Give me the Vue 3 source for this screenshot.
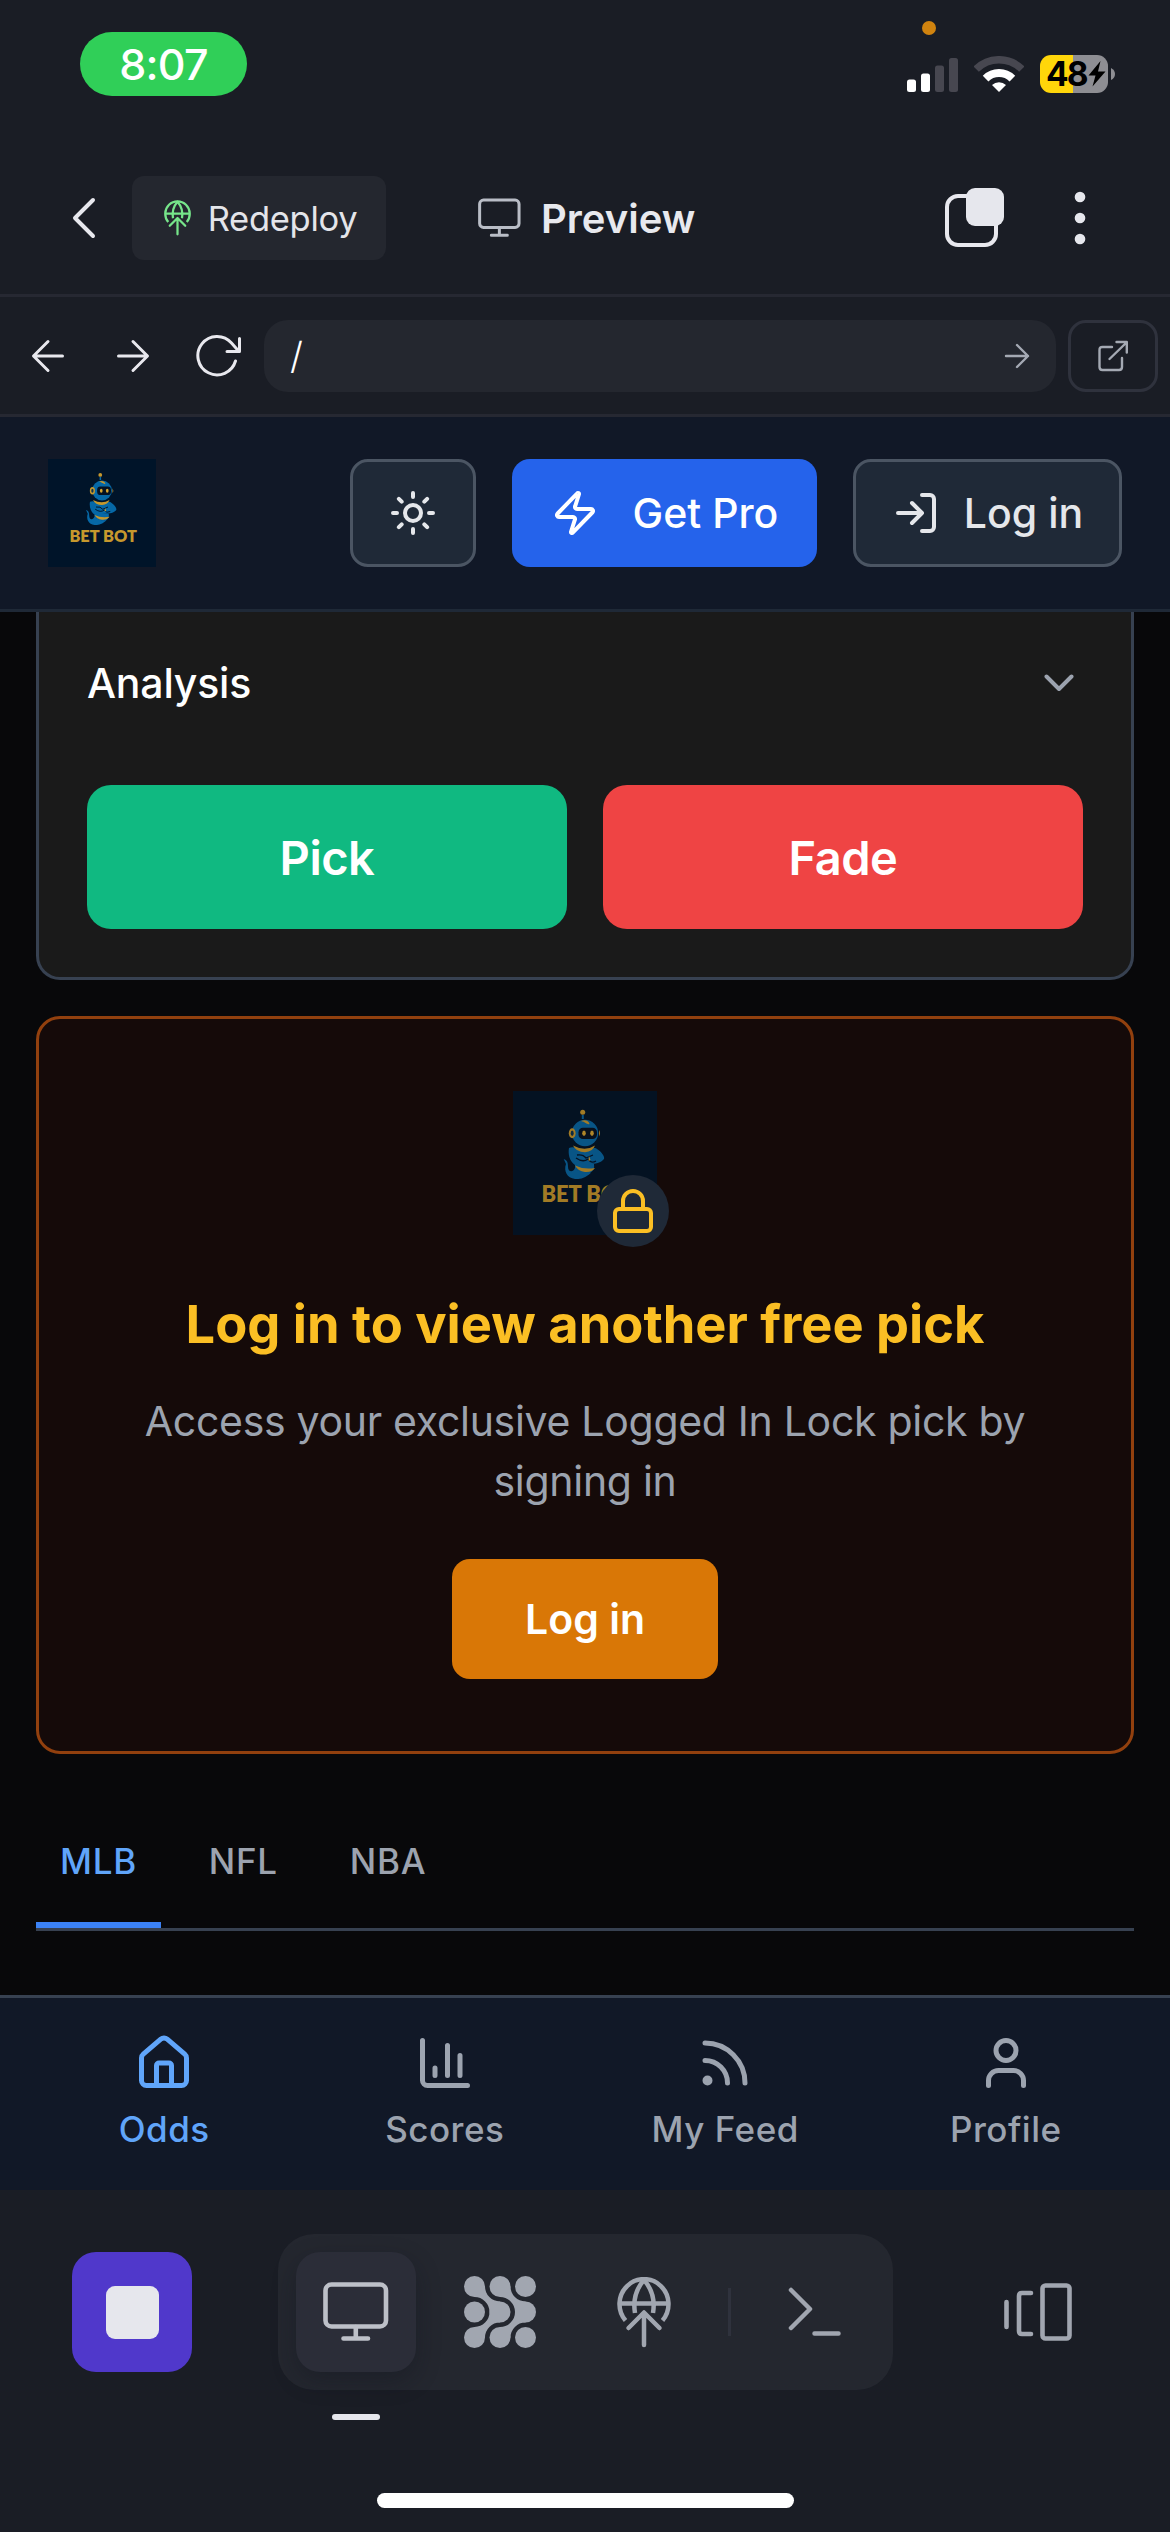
<script setup>
const leagues = ['MLB', 'NFL', 'NBA']
const activeLeague = 'MLB'
</script>

<template>
  <div class="screen">
    <header class="status">
      <div class="time">8:07</div>
      <i class="privacy-dot"></i>
      <div class="indicators">
        <svg width="51" height="36" viewBox="0 0 51 36">
          <rect x="0" y="23.500" width="9" height="12.500" rx="2.500" fill="#fff" />
          <rect x="14" y="17.500" width="9" height="18.500" rx="2.500" fill="#fff" />
          <rect x="28" y="9.500" width="9" height="26.500" rx="2.500" fill="#474750" />
          <rect x="42" y="2" width="9" height="34" rx="2.500" fill="#474750" />
        </svg>
        <svg class="wifi" width="50" height="36" viewBox="0 0 50 36">
          <path d="M2.200 13.200 A32.200 32.200 0 0 1 47.800 13.200" fill="none" stroke="#474750" stroke-width="7.500" />
          <path d="M11.600 22.600 A19 19 0 0 1 38.400 22.600" fill="none" stroke="#fff" stroke-width="8" />
          <path d="M25 36 L18 29 A10.300 10.300 0 0 1 32 29Z" fill="#fff" />
        </svg>
        <div class="battery">
          <span>48</span>
          <svg width="18" height="26" viewBox="0 0 18 26"><path d="M12.500 0 L0.500 14.500 H7.500 L4.500 25.500 L17.500 10.500 H10Z" fill="#000" /></svg>
        </div>
        <svg class="nub" width="4" height="12" viewBox="0 0 4 12"><path d="M0 0 Q4 2 4 6 Q4 10 0 12Z" fill="#8e8e93" /></svg>
      </div>
    </header>

    <div class="toolbar">
      <svg class="back" width="24" height="42" viewBox="0 0 24 42"><path d="M21 3 L3 21 L21 39" fill="none" stroke="#e8e8ee" stroke-width="4" stroke-linecap="round" stroke-linejoin="round" /></svg>
      <button class="redeploy">
        <svg width="27" height="36"><use href="#deploy" /></svg>
        <span>Redeploy</span>
      </button>
      <div class="preview">
        <svg width="43" height="40"><use href="#monitor" /></svg>
        <span>Preview</span>
      </div>
      <svg class="windows" width="60" height="60" viewBox="0 0 60 60">
        <rect x="2" y="8" width="49" height="49" rx="11" fill="none" stroke="#e8e8ee" stroke-width="4" />
        <rect x="21" y="0" width="38" height="38" rx="9" fill="#e6e7ed" />
      </svg>
      <svg class="more" width="12" height="54" viewBox="0 0 12 54" fill="#e6e7ed">
        <circle cx="6" cy="6" r="5.300" /><circle cx="6" cy="27" r="5.300" /><circle cx="6" cy="48" r="5.300" />
      </svg>
    </div>

    <nav class="browser">
      <svg class="nav-back" width="34" height="34" viewBox="0 0 34 34"><path d="M31.500 17 H3 M17 2.500 L2.500 17 L17 31.500" /></svg>
      <svg class="nav-next" width="34" height="34" viewBox="0 0 34 34"><path d="M2.500 17 H31 M17 2.500 L31.500 17 L17 31.500" /></svg>
      <svg class="reload" width="46" height="44" viewBox="0 0 46 44"><path d="M39.500 27 A19.200 19.200 0 1 1 35.500 9 L43 17.500 M43.500 4.500 V17.500 H31" /></svg>
      <div class="url">
        <span>/</span>
        <svg width="26" height="26" viewBox="0 0 26 26"><path d="M2 13 H24 M13 2 L24 13 L13 24" /></svg>
      </div>
      <button class="external">
        <svg width="32" height="32" viewBox="0 0 32 32"><path d="M15 7 H5.500 Q2.500 7 2.500 10 V27 Q2.500 30 5.500 30 H22 Q25 30 25 27 V18 M12.500 19 L29.500 2.500 M19.500 2 H29.800 V12.500" /></svg>
      </button>
    </nav>

    <header class="app-header">
      <svg class="logo" width="108" height="108" viewBox="0 0 144 144">
        <use href="#bot-mark" width="144" height="144" />
        <text x="28.500" y="110.800" textLength="90" lengthAdjust="spacingAndGlyphs">BET BOT</text>
      </svg>
      <button class="btn theme">
        <svg width="48" height="48" viewBox="0 0 24 24"><circle cx="12" cy="12" r="4" /><path d="M12 2v2M12 20v2M4.930 4.930l1.410 1.410M17.660 17.660l1.410 1.410M2 12h2M20 12h2M6.340 17.660l-1.410 1.410M19.070 4.930l-1.410 1.410" /></svg>
      </button>
      <button class="btn pro">
        <svg width="48" height="48" viewBox="0 0 24 24"><path d="M4 14a1 1 0 0 1-.780-1.630l9.900-10.200a.5.5 0 0 1 .860.460l-1.920 6.020A1 1 0 0 0 13 10h7a1 1 0 0 1 .780 1.630l-9.900 10.200a.5.5 0 0 1-.860-.460l1.920-6.020A1 1 0 0 0 11 14z" /></svg>
        <span>Get Pro</span>
      </button>
      <button class="btn login">
        <svg width="48" height="48" viewBox="0 0 24 24"><path d="M15 3h4a2 2 0 0 1 2 2v14a2 2 0 0 1-2 2h-4M10 17l5-5-5-5M15 12H3" /></svg>
        <span>Log in</span>
      </button>
    </header>

    <main class="content">
      <section class="pick-card">
        <div class="analysis">
          <span>Analysis</span>
          <svg width="30" height="18" viewBox="0 0 30 18"><path d="M2.500 2.500 L15 15 L27.500 2.500" fill="none" stroke="#9ca3af" stroke-width="4" stroke-linecap="round" stroke-linejoin="round" /></svg>
        </div>
        <div class="choices">
          <button class="pick">Pick</button>
          <button class="fade">Fade</button>
        </div>
      </section>

      <section class="lock-card">
        <div class="lock-logo">
          <svg class="logo dim" width="144" height="144" viewBox="0 0 144 144">
            <use href="#bot-mark" width="144" height="144" />
            <text x="28.500" y="110.800" textLength="90" lengthAdjust="spacingAndGlyphs">BET BOT</text>
          </svg>
          <div class="badge">
            <svg width="48" height="48" viewBox="0 0 24 24"><rect x="3" y="11" width="18" height="11" rx="2" /><path d="M7 11V7a5 5 0 0 1 10 0v4" /></svg>
          </div>
        </div>
        <h2>Log in to view another free pick</h2>
        <p>Access your exclusive Logged In Lock pick by<br />signing in</p>
        <button class="signin">Log in</button>
      </section>

      <div class="tabs">
        <div v-for="l in leagues" :key="l" class="tab" :class="{ active: l === activeLeague }">{{ l }}</div>
      </div>
    </main>

    <nav class="bottom-nav">
      <a class="active">
        <svg viewBox="0 0 24 24"><path d="M15 21v-8a1 1 0 0 0-1-1h-4a1 1 0 0 0-1 1v8" /><path d="M3 10a2 2 0 0 1 .709-1.528l7-5.999a2 2 0 0 1 2.582 0l7 5.999A2 2 0 0 1 21 10v9a2 2 0 0 1-2 2H5a2 2 0 0 1-2-2z" /></svg>
        <span>Odds</span>
      </a>
      <a>
        <svg viewBox="0 0 24 24"><path d="M3 3v16a2 2 0 0 0 2 2h16M18 17V9M13 17V5M8 17v-3" /></svg>
        <span>Scores</span>
      </a>
      <a>
        <svg viewBox="0 0 24 24"><path d="M4 11a9 9 0 0 1 9 9M4 4a16 16 0 0 1 16 16" /><circle cx="5" cy="19" r="1" /></svg>
        <span>My Feed</span>
      </a>
      <a>
        <svg viewBox="0 0 24 24"><path d="M19 21v-2a4 4 0 0 0-4-4H9a4 4 0 0 0-4 4v2" /><circle cx="12" cy="7" r="4" /></svg>
        <span>Profile</span>
      </a>
    </nav>

    <footer class="dock">
      <div class="dock-row">
        <button class="stop"><i></i></button>
        <div class="tools">
          <div class="tool selected">
            <svg width="66" height="60"><use href="#monitor" /></svg>
            <i></i>
          </div>
          <div class="tool">
            <svg width="72" height="72" viewBox="0 0 72 72" fill="currentColor">
              <circle v-for="n in 9" :key="n" :cx="10.5 + ((n - 1) % 3) * 25.5" :cy="10.5 + Math.floor((n - 1) / 3) * 25.5" r="10.500" />
              <g v-for="dx in [0, 25.5]" :key="dx" :transform="`translate(${dx} 0)`">
                <path d="M21 10.500 A15 15 0 0 0 36 25.500 V46.500 A15 15 0 0 0 21 61.500 L10.500 61.500 V51 A15 15 0 0 0 10.500 21 V10.500Z" />
              </g>
            </svg>
          </div>
          <div class="tool">
            <svg width="54" height="71"><use href="#deploy" /></svg>
          </div>
          <i class="divider"></i>
          <div class="tool">
            <svg width="54" height="50" viewBox="0 0 54 50"><path d="M3 3 L22 22 L3 41 M26.500 46.500 H50.500" fill="none" stroke="currentColor" stroke-width="4.500" stroke-linecap="round" stroke-linejoin="round" /></svg>
          </div>
        </div>
        <svg class="panels" width="69" height="58" viewBox="0 0 69 58"><path d="M2.500 19 V44 M27 10 H18 Q15 10 15 13 V48 Q15 51 18 51 H27" /><rect x="38.500" y="2.500" width="27" height="53" rx="3" /></svg>
      </div>
      <div class="home-indicator"></div>
    </footer>

    <svg class="defs" aria-hidden="true">
      <symbol id="bot-mark" viewBox="0 0 144 144">
        <rect width="144" height="144" fill="#001429" />
        <g fill="#0668a6">
          <path d="M56 57 C60 55 64 57 72 60.500 C80 57 82 56 84 58 C89 61 92 66 91 68 C88 72 82 73 77 73 L62 74 C56 70 55 62 56 57Z" />
          <path d="M62 73 H81 Q82 79 77 82 Q70 84 62 78Z" />
          <path d="M50.700 68 C54 69 55 71 55 76 C55 81 60 82 62 77 C66 81 72 82.500 78 81.700 C72 87.500 66 88.500 62 88 C54 87 50.500 80 53 73Z" />
          <circle cx="72" cy="42" r="13.200" />
          <rect x="68.800" y="24" width="2" height="4" />
        </g>
        <g fill="#c6982d">
          <circle cx="69.700" cy="21.300" r="2.500" />
          <path d="M68 30 C72 28 76 30 76.500 33 C74 34 73 31 68 30Z" />
          <ellipse cx="59.200" cy="42.300" rx="3.400" ry="5" />
          <path d="M86 39 Q88 42 86 45.500Z" />
          <path d="M60 54.500 Q72 61 82 54.500 Q80 60.500 72 61.200 Q63 61 60 54.500Z" />
          <path d="M62 74.500 Q71 79 82 77 Q79 81.500 72 81 Q65 80 62 74.500Z" />
        </g>
        <rect x="65.500" y="36.800" width="18.500" height="11.200" rx="4.500" fill="#041223" />
        <ellipse cx="59.200" cy="42.300" rx="1.500" ry="2.800" fill="#0b3350" />
        <g fill="#d6a531">
          <ellipse cx="71" cy="42.300" rx="1.800" ry="2.700" />
          <ellipse cx="79" cy="42.300" rx="1.800" ry="2.700" />
        </g>
        <path d="M64 64 Q70 63 73 67 L80 64 M63 67 Q70 72 75 68 Q78 73 83 70" fill="none" stroke="#001429" stroke-width="1.300" />
        <path d="M76 65 L77.500 69 L75.500 70Z" fill="#d6a531" />
      </symbol>
      <symbol id="deploy" viewBox="0 0 54 71">
        <g fill="none" stroke="currentColor" stroke-width="4.500" stroke-linecap="round" stroke-linejoin="round">
          <path stroke-linecap="butt" d="M8.500 43.500 A24.500 25 0 1 1 45.500 43.500" />
          <path stroke-linecap="butt" d="M18 36 C16 24 19 12 27 3 C35 12 38 24 36 36 M3 26.500 H51" />
          <path d="M27 36 V68 M11.500 51 L27 35.500 L42.500 51" />
        </g>
      </symbol>
      <symbol id="monitor" viewBox="0 0 66 60">
        <g fill="none" stroke="currentColor" stroke-width="4.600" stroke-linecap="round">
          <rect x="2.500" y="2.500" width="60.500" height="42" rx="6" />
          <path d="M32.800 45 V56.500 M20.500 56.500 H45" />
        </g>
      </symbol>
    </svg>
  </div>
</template>

<style>
body {
  margin: 0;
  background: #1a1d25;
}
</style>

<style scoped>
* {
  box-sizing: border-box;
}
.screen {
  width: 1170px;
  height: 2532px;
  display: flex;
  flex-direction: column;
  overflow: hidden;
  background: #1a1d25;
  font-family: Inter, "Liberation Sans", sans-serif;
  color: #fff;
}
.defs {
  position: absolute;
  width: 0;
  height: 0;
}
svg {
  display: block;
  flex: none;
}
button {
  border: 0;
  padding: 0;
  margin: 0;
  font: inherit;
  color: inherit;
  display: flex;
  align-items: center;
  justify-content: center;
  flex: none;
}
span {
  white-space: nowrap;
}

.status {
  position: relative;
  height: 142px;
  flex: none;
  display: flex;
  justify-content: space-between;
  padding: 32px 55px 0 80px;
}
.time {
  width: 167px;
  height: 64px;
  border-radius: 32px;
  background: #30cf58;
  display: flex;
  align-items: center;
  justify-content: center;
  font-size: 43px;
  font-weight: 500;
  letter-spacing: -0.8px;
}
.privacy-dot {
  position: absolute;
  left: 922px;
  top: 21px;
  width: 14px;
  height: 14px;
  border-radius: 50%;
  background: #d0830f;
}
.indicators {
  display: flex;
  align-items: center;
  height: 38px;
  margin-top: 23px;
}
.wifi {
  margin-left: 16px;
}
.battery {
  width: 68px;
  height: 38px;
  margin-left: 16px;
  border-radius: 11px;
  background: linear-gradient(90deg, #ffd60a 33px, #8e8e93 33px);
  display: flex;
  align-items: center;
  padding-left: 6px;
  color: #000;
  font-size: 33.5px;
  font-weight: 700;
  letter-spacing: -2px;
}
.battery svg {
  margin-left: 2px;
}
.nub {
  margin-left: 3px;
}

.toolbar {
  height: 155px;
  flex: none;
  display: flex;
  align-items: center;
  border-bottom: 3px solid #262832;
  padding-left: 72px;
}
.redeploy {
  width: 254px;
  height: 84px;
  margin-left: 36px;
  padding-left: 3px;
  border-radius: 12px;
  background: #24272f;
  color: #e4e5ea;
  font-size: 34.5px;
  letter-spacing: -0.3px;
  gap: 17px;
}
.redeploy svg {
  color: #76e58a;
}
.preview {
  display: flex;
  align-items: center;
  gap: 20px;
  margin-left: 92px;
  width: 467px;
  font-size: 40px;
  font-weight: 600;
  color: #e8e9ee;
}
.preview svg {
  color: #b9bdc6;
}
.more {
  margin-left: 69px;
}

.browser {
  height: 120px;
  flex: none;
  display: flex;
  align-items: center;
  border-bottom: 3px solid #262832;
  padding: 0 12px 0 31px;
}
.browser svg {
  fill: none;
  stroke: #e8e8ee;
  stroke-width: 3;
  stroke-linecap: round;
  stroke-linejoin: round;
}
.nav-next {
  margin-left: 51px;
}
.reload {
  margin-left: 46px;
}
.url {
  flex: 1;
  height: 72px;
  margin-left: 22px;
  border-radius: 24px;
  background: #24272f;
  display: flex;
  align-items: center;
  justify-content: space-between;
  padding: 0 26px;
  font-size: 37px;
  font-weight: 300;
}
.browser .url svg,
.browser .external svg {
  stroke: #a4a9b3;
  stroke-width: 2.4;
}
.external {
  width: 90px;
  height: 72px;
  margin-left: 12px;
  border: 3px solid #2f323d;
  border-radius: 18px;
  background: transparent;
}

.app-header {
  height: 195px;
  flex: none;
  display: flex;
  align-items: center;
  padding: 0 48px;
  background: #111827;
  border-bottom: 3px solid #1f2937;
}
.logo text {
  font-family: Lato, sans-serif;
  font-weight: 800;
  font-size: 22px;
  fill: #c6982d;
}
.btn {
  height: 108px;
  border-radius: 18px;
  background: #1f2937;
  color: #e5e7eb;
  font-size: 41px;
  font-weight: 500;
}
.btn svg {
  fill: none;
  stroke: currentColor;
  stroke-width: 2;
  stroke-linecap: round;
  stroke-linejoin: round;
}
.theme {
  width: 126px;
  margin-left: 194px;
  border: 3px solid #4b5563;
}
.pro {
  width: 305px;
  margin-left: 36px;
  background: #2563eb;
  color: #fff;
  gap: 34px;
}
.login {
  width: 269px;
  margin-left: 36px;
  border: 3px solid #4b5563;
  gap: 24px;
}

.content {
  height: 1383px;
  flex: none;
  padding: 0 36px;
  background: #08080a;
}
.pick-card {
  height: 368px;
  border: 3px solid #374151;
  border-top: 0;
  border-radius: 0 0 24px 24px;
  background: #1a1a1a;
  padding: 0 48px;
}
.analysis {
  height: 142px;
  display: flex;
  align-items: center;
  justify-content: space-between;
  padding-right: 9px;
  font-size: 41px;
  font-weight: 500;
  letter-spacing: -0.2px;
}
.choices {
  display: flex;
  gap: 36px;
  margin-top: 31px;
}
.choices button {
  flex: 1;
  height: 144px;
  border-radius: 24px;
  font-size: 47px;
  font-weight: 600;
  letter-spacing: -0.5px;
}
.pick {
  background: #10b981;
}
.fade {
  background: #ef4444;
}

.lock-card {
  height: 738px;
  margin-top: 36px;
  border: 3px solid #92400e;
  border-radius: 24px;
  background: #150a09;
  display: flex;
  flex-direction: column;
  align-items: center;
  padding-top: 72px;
}
.lock-logo {
  position: relative;
}
.dim {
  opacity: 0.8;
}
.badge {
  position: absolute;
  right: -12px;
  bottom: -12px;
  width: 72px;
  height: 72px;
  border-radius: 50%;
  background: #1f2937;
  display: flex;
  align-items: center;
  justify-content: center;
}
.badge svg {
  fill: none;
  stroke: #fbbf24;
  stroke-width: 2;
  stroke-linecap: round;
  stroke-linejoin: round;
}
h2 {
  margin: 53px 0 0;
  font-size: 52.4px;
  line-height: 72px;
  font-weight: 700;
  color: #fbbf24;
  white-space: nowrap;
}
p {
  margin: 31px 0 0;
  text-align: center;
  font-size: 41px;
  line-height: 60px;
  letter-spacing: -0.3px;
  color: #9ca3af;
  white-space: nowrap;
}
.signin {
  width: 266px;
  height: 120px;
  margin-top: 48px;
  border-radius: 18px;
  background: #d97706;
  font-size: 41px;
  font-weight: 600;
}

.tabs {
  display: flex;
  height: 135px;
  margin-top: 42px;
  border-bottom: 3px solid #374151;
}
.tab {
  padding: 0 24px;
  margin-right: 24px;
  line-height: 130px;
  height: 132px;
  font-size: 35px;
  font-weight: 500;
  letter-spacing: 0.7px;
  color: #9ca3af;
}
.tab.active {
  color: #60a5fa;
  border-bottom: 6px solid #3b82f6;
}

.bottom-nav {
  height: 195px;
  flex: none;
  display: flex;
  padding: 35px 24px 0;
  background: #111827;
  border-top: 3px solid #374151;
}
.bottom-nav a {
  flex: 1;
  display: flex;
  flex-direction: column;
  align-items: center;
  gap: 12px;
  color: #9ca3af;
  font-size: 35px;
  font-weight: 500;
  line-height: 48px;
  letter-spacing: 0.5px;
}
.bottom-nav svg {
  width: 60px;
  height: 60px;
  fill: none;
  stroke: currentColor;
  stroke-width: 2;
  stroke-linecap: round;
  stroke-linejoin: round;
}
.bottom-nav a.active {
  color: #60a5fa;
}

.dock {
  height: 342px;
  flex: none;
  display: flex;
  flex-direction: column;
  align-items: center;
  padding-top: 44px;
}
.dock-row {
  display: flex;
  align-items: center;
  width: 1170px;
  padding-left: 72px;
}
.stop {
  width: 120px;
  height: 120px;
  border-radius: 24px;
  background: #5038cb;
}
.stop i {
  width: 53px;
  height: 53px;
  border-radius: 9px;
  background: #e6e7ed;
}
.tools {
  width: 615px;
  height: 156px;
  flex: none;
  margin-left: 86px;
  border-radius: 36px;
  background: #24272f;
  display: flex;
  align-items: center;
  gap: 24px;
  padding: 0 18px;
  color: #a1a6b0;
}
.tool {
  position: relative;
  flex: none;
  width: 120px;
  height: 120px;
  display: flex;
  align-items: center;
  justify-content: center;
}
.tool.selected {
  border-radius: 24px;
  background: #2b2d38;
  color: #bdc0c8;
  box-shadow: 0 9px 24px rgba(14, 15, 25, 0.3);
}
.tool.selected i {
  position: absolute;
  left: 36px;
  bottom: -48px;
  width: 48px;
  height: 6px;
  border-radius: 3px;
  background: #e6e7ed;
}
.divider {
  flex: none;
  width: 3px;
  height: 48px;
  background: #2f323d;
}
.panels {
  margin-left: 111px;
  fill: none;
  stroke: #a1a6b0;
  stroke-width: 4.6;
  stroke-linecap: round;
}
.home-indicator {
  width: 417px;
  height: 15px;
  margin-top: 103px;
  border-radius: 8px;
  background: #fff;
}
</style>
